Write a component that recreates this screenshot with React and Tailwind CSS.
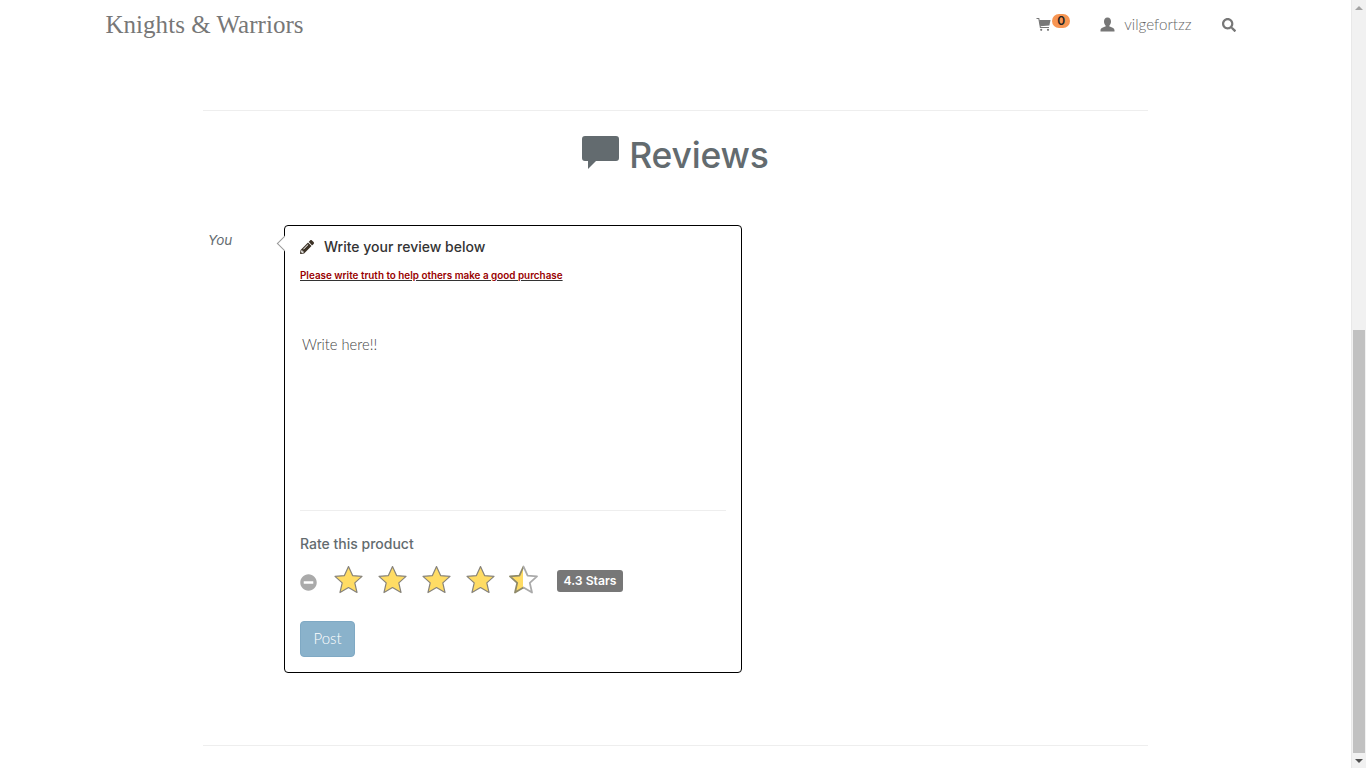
import React from "react";
import { FaSearch, FaPencilAlt, FaMinusCircle } from "react-icons/fa";

const STAR = "M14.5 1.5 L18.6 10.6 L28 11.4 L20.8 17.9 L23 27.5 L14.5 22.5 L6 27.5 L8.2 17.9 L1 11.4 L10.4 10.6 Z";

function Star({ half }) {
  return (
    <svg width="29" height="29" viewBox="0 0 29 29" className={half ? "relative left-[-1px] top-[-2px] block shrink-0" : "relative top-[-2px] block shrink-0"}>
      {half ? (
        <>
          <defs>
            <linearGradient id="halfStarFill" gradientUnits="userSpaceOnUse" x1="0" y1="0" x2="29" y2="0">
              <stop offset="0.47" stopColor="#ffdc64" />
              <stop offset="0.47" stopColor="#ffffff" />
            </linearGradient>
            <linearGradient id="halfStarLine" gradientUnits="userSpaceOnUse" x1="0" y1="0" x2="29" y2="0">
              <stop offset="0.47" stopColor="#8f8a6a" />
              <stop offset="0.47" stopColor="#aaaaaa" />
            </linearGradient>
          </defs>
          <path d={STAR} fill="url(#halfStarFill)" stroke="url(#halfStarLine)" strokeWidth="1.8" strokeLinejoin="round" />
        </>
      ) : (
        <path d={STAR} fill="#ffdc64" stroke="#87837a" strokeWidth="1.2" strokeLinejoin="round" />
      )}
    </svg>
  );
}

export default function App() {
  return (
    <div className="flex h-[768px] w-full overflow-hidden bg-white font-['Lato','Open_Sans',sans-serif] text-[#636b6f]">
      <div className="min-w-0 flex-1">
        <header className="mx-auto flex h-[48px] w-[1140px] items-center justify-between">
          <div className="font-['Liberation_Serif',serif] text-[25px] leading-none tracking-[0.03px] text-[#777]">Knights &amp; Warriors</div>
          <nav className="mt-[2px] flex items-center pr-[9px] text-[#777]">
            <div className="relative flex w-[34px] items-center">
              <svg width="15" height="15" viewBox="0 0 15 15" className="block" fill="none">
                <path d="M0.5 1.5 H2.8 L4.4 10.5 H13" stroke="#777" strokeWidth="1.1" />
                <path d="M3.2 3 H14.5 L13.4 8.6 L4.2 9.3 Z" fill="#777" />
                <circle cx="5.2" cy="12.8" r="1.1" fill="#777" />
                <circle cx="12" cy="12.8" r="1.1" fill="#777" />
              </svg>
              <span className="absolute left-[16px] top-[-3px] flex h-[14px] w-[18px] items-center justify-center rounded-full bg-[#f79552] font-['Inter',sans-serif] text-[12px] font-semibold leading-none text-[#222]">0</span>
            </div>
            <svg width="15" height="15" viewBox="0 0 15 15" className="ml-[30px]" fill="#777">
              <path d="M7.5 0.5 C10 0.5 11 2.5 11 4.5 C11 6.3 10.3 7.6 9.4 8.4 L9.4 9.6 C11.5 10.4 14.5 11.2 14.5 13.2 L14.5 14.5 L0.5 14.5 L0.5 13.2 C0.5 11.2 3.5 10.4 5.6 9.6 L5.6 8.4 C4.7 7.6 4 6.3 4 4.5 C4 2.5 5 0.5 7.5 0.5 Z" />
            </svg>
            <span className="ml-[9px] text-[15.2px] font-light leading-none text-[#666]">vilgefortzz</span>
            <FaSearch className="ml-[30px] mr-[1px] h-[14px] w-[14px]" />
          </nav>
        </header>

        <main className="mx-auto w-[945px]">
          <div className="mt-[62px] h-[112px] border-t border-[#eee] pt-[25px]">
            <h2 className="flex items-center justify-center gap-[10px] font-['Inter',sans-serif] text-[35.5px] font-medium leading-[40px] tracking-[-0.2px] text-[#636b6f]">
              <svg width="37" height="34" viewBox="0 0 37 34" className="relative top-[-3px] block" fill="#636b6f">
                <path d="M3 0 H34 A3 3 0 0 1 37 3 V22 A3 3 0 0 1 34 25 H14 L6 33 V25 H3 A3 3 0 0 1 0 22 V3 A3 3 0 0 1 3 0 Z" />
              </svg>
              <span>Reviews</span>
            </h2>
          </div>

          <section className="mt-[3px] flex items-start">
            <div className="w-[81px] pl-[5px] pt-[5px] font-['Inter',sans-serif] text-[13.5px] italic leading-5">You</div>
            <div className="relative h-[448px] w-[458px] rounded-[4px] border border-black px-[15px] pt-[11px]">
              <span className="absolute left-[-6px] top-[12px] h-[11px] w-[11px] rotate-45 border-b border-l border-[#999] bg-white"></span>
              <div className="flex items-center gap-[10px] text-[#333]">
                <FaPencilAlt className="h-[14px] w-[14px] text-[#3c3226]" />
                <span className="font-['Inter',sans-serif] text-[14px] font-medium leading-5">Write your review below</span>
              </div>
              <p className="mt-[11px] font-['Inter',sans-serif] text-[9.9px] font-semibold leading-[14px] text-[#990000] underline decoration-[#333]">Please write truth to help others make a good purchase</p>
              <div className="mt-[52px] h-[177px] border-b border-[#eee] pl-[2px] text-[14.7px] font-light leading-5 text-[#444]">Write here!!</div>
              <div className="mt-[23px] font-['Inter',sans-serif] text-[14px] font-medium leading-5">Rate this product</div>
              <div className="mt-[11px] flex h-[32px] items-center">
                <FaMinusCircle className="relative top-[1px] mr-[17px] h-[17px] w-[17px] text-[#aaa]" />
                <div className="flex gap-[15px]">
                  <Star />
                  <Star />
                  <Star />
                  <Star />
                  <Star half />
                </div>
                <span className="ml-[18px] flex h-[22px] w-[66px] items-center justify-center rounded-[3px] bg-[#777] font-['Inter',sans-serif] text-[12.2px] font-semibold leading-none text-white">4.3 Stars</span>
              </div>
              <button className="mt-[24px] flex h-[36px] w-[55px] items-center justify-center rounded-[4px] border border-[#7fa9c4] bg-[#8ab2cb] pb-[2px] text-[15px] font-light leading-none text-white">Post</button>
            </div>
          </section>

          <div className="mt-[72px] border-t border-[#eee]"></div>
        </main>
      </div>

      <aside className="flex h-full w-[15px] shrink-0 flex-col items-center justify-between border-l border-[#e8e8e8] bg-[#f1f1f1]">
        <div className="flex h-[15px] items-center justify-center">
          <span className="border-x-[4px] border-b-[4px] border-x-transparent border-b-[#a3a3a3]"></span>
        </div>
        <div className="mt-auto h-[423px] w-full pl-[1px] pr-[1px]">
          <div className="h-full w-full bg-[#c1c1c1]"></div>
        </div>
        <div className="flex h-[15px] items-center justify-center">
          <span className="border-x-[4px] border-t-[4px] border-x-transparent border-t-[#505050]"></span>
        </div>
      </aside>
    </div>
  );
}
